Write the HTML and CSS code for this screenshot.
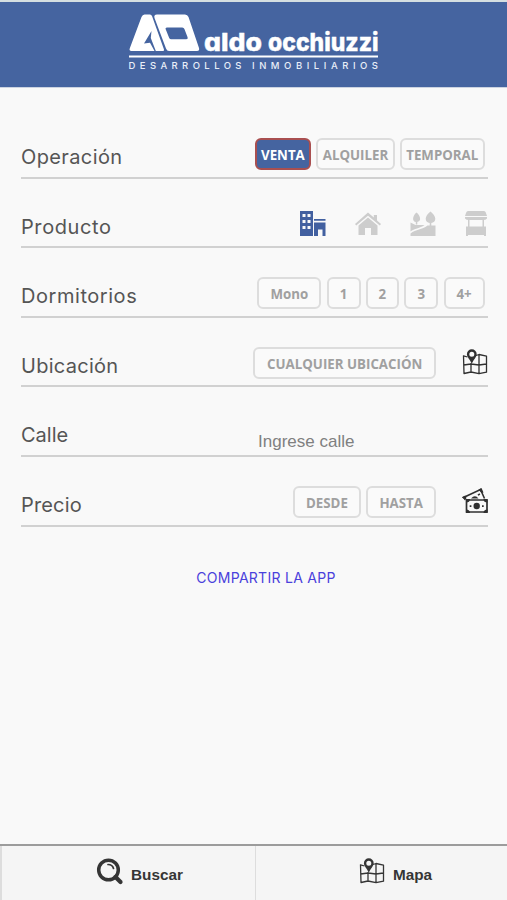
FILE: index.html
```html
<!DOCTYPE html>
<html lang="es">
<head>
<meta charset="utf-8">
<meta name="viewport" content="width=device-width, initial-scale=1">
<title>Aldo Occhiuzzi</title>
<link rel="stylesheet" href="styles.css">
</head>
<body>
<svg width="0" height="0" class="defs" aria-hidden="true">
  <symbol id="map" viewBox="0 0 26 26">
    <path d="M5.500 8 1.500 6.800 2 24.500l7-1.500 8 1.700 7.500-1.500V7.200L17 5.500l-3 1M1.700 16l7.300-1 8 1 7.500-1M9 14v9M17 5.500v19" fill="none" stroke="currentColor" stroke-width="1.300" stroke-linejoin="round"/>
    <path fill="currentColor" fill-rule="evenodd" d="M9.800.3A4.900 4.900 0 0 0 4.900 5.200c0 3 3 4.800 4.900 9.600 1.900-4.800 4.900-6.600 4.900-9.600A4.900 4.900 0 0 0 9.800.3zm0 2.400a2.500 2.500 0 1 1 0 5 2.500 2.500 0 0 1 0-5z"/>
  </symbol>
</svg>
<header class="header">
  <svg class="logo" width="262" height="64" viewBox="-2 0 262 64" fill="#fff">
    <path fill-rule="evenodd" d="M19.500 2.500h5.500q1.300 0 2 1.500L39 37.500Q39.300 39 38 39H6.500Q3.800 39 4.800 36.300L16.500 5Q17.500 2.500 19.500 2.500zM26.500 19 19 31.500l6-.8 4.500 8.300h1.300L25.800 26z"/>
    <path fill-rule="evenodd" d="M32 2.500h28q2.500 0 3.500 2.500L74 36q.8 3-2 3H44q-2 0-3-2.500L29.500 6Q28.500 2.500 32 2.500zM42 15.500q-2 0-1.200 2l3.300 8.200q.6 1.500 2.200 1.500h15q2 0 1.300-2l-3.200-8.200q-.5-1.500-2.100-1.500z"/>
    <text class="wordmark" x="79" y="38.500" textLength="58" lengthAdjust="spacingAndGlyphs">aldo</text>
    <text class="wordmark" x="143" y="38.500" textLength="110.500" lengthAdjust="spacingAndGlyphs">occhiuzzi</text>
    <path d="M4 43.500h249v2H4z"/>
    <text class="tagline" x="3.500" y="57" textLength="113">DESARROLLOS</text>
    <text class="tagline" x="127" y="57" textLength="126">INMOBILIARIOS</text>
  </svg>
</header>
<main class="form">
  <section class="row">
    <h2 class="label operacion">Operación</h2>
    <div class="options">
      <button class="btn active w56">VENTA</button><button class="btn w79">ALQUILER</button><button class="btn w85">TEMPORAL</button>
    </div>
  </section>
  <section class="row">
    <h2 class="label producto">Producto</h2>
    <div class="products">
      <svg class="chosen" width="26" height="26" viewBox="0 0 26 26"><path fill="currentColor" fill-rule="evenodd" d="M0 0h13v25H0zM2.500 3v3h3V3zm5 0v3h3V3zm-5 6v3h3V9zm5 0v3h3V9zm-5 6v3h3v-3zm5 0v3h3v-3zM14 8h11.500v1.700H14zM14 11.500h11.500V25h-3v-6.500h-4.500V25h-4z"/></svg>
      <svg width="26" height="26" viewBox="0 0 26 26"><path fill="currentColor" d="M13 1.500l5.800 5V4H22v5.400l4 3.600-1.200 1.500L13 4.800 1.200 14.500 0 13zM13 6.500l9.500 8V24H16v-7h-6v7H3.500v-9.500z"/></svg>
      <svg width="26" height="26" viewBox="0 0 26 26"><path fill="currentColor" d="M6.500 1.500C8.500 3 10.300 6 10.100 8c0 1.500-1.200 2.600-2.800 3v2.500H5.800V11c-1.600-.3-2.700-1.400-2.700-3 0-2 1.300-5 3.400-6.500zM20.500.500c2.700 2 4.800 5 4.800 7.300 0 2.500-1.700 4-4 4.300v3h-1.600v-3c-2.300-.3-4-1.800-4-4.300 0-2.300 2-5.300 4.800-7.300zM.5 11.500l5 2.500h9C10 17.500 4 17.500.5 20.500zM.5 22.500C6 18 12 19 17.500 14.500H25.500V25H.5z"/></svg>
      <svg width="22" height="26" viewBox="0 0 22 26"><path fill="currentColor" d="M3 0h16q1.300 0 1.800 1.500L22 5H0l1.200-3.500Q1.700 0 3 0zM0 6h22v1.500Q20.500 9 18.500 9H3.500Q1.500 9 0 7.500zM3 9h1.500v6.500H3zm14.500 0H19v6.500h-1.500zM1 15.500h20V25h-2v-1H3v1H1z"/></svg>
    </div>
  </section>
  <section class="row">
    <h2 class="label dormitorios">Dormitorios</h2>
    <div class="options">
      <button class="btn w64">Mono</button><button class="btn w34">1</button><button class="btn w33">2</button><button class="btn w34">3</button><button class="btn w41">4+</button>
    </div>
  </section>
  <section class="row">
    <h2 class="label ubicacion">Ubicación</h2>
    <div class="options with-icon">
      <button class="btn w183">CUALQUIER UBICACIÓN</button>
      <svg class="side-icon" width="26" height="26"><use href="#map"/></svg>
    </div>
  </section>
  <section class="row">
    <h2 class="label calle">Calle</h2>
    <input class="street" type="text" placeholder="Ingrese calle">
  </section>
  <section class="row">
    <h2 class="label precio">Precio</h2>
    <div class="options with-icon">
      <button class="btn w68">DESDE</button><button class="btn w70">HASTA</button>
      <svg class="side-icon" width="26" height="26" viewBox="0 0 26 26"><path d="M3.500 11 1.500 9.500 18.500 1.500l4 9" fill="none" stroke="currentColor" stroke-width="1.600"/><path fill="currentColor" d="M.3 9l3-1.500 1.200 2.500L3 12.500zM16.500 1.500l3-1.500L21.500 4.500l-2 .5zM9 10.500q4-4.500 7.500 0zM15.500 6.500l2-1.300.8 1.500-2 1z"/><path d="M4.500 12h20.500v12h-20.500z" fill="#f9f9f9" stroke="currentColor" stroke-width="1.700"/><circle cx="14.700" cy="18" r="3.200" fill="currentColor"/><path fill="currentColor" d="M4 11h4q0 3.500-4 3.500zM25.500 11h-4q0 3.500 4 3.500zM4 25h4q0-3.500-4-3.500zM25.500 25h-4q0-3.500 4-3.500zM7.700 17.200h1.700v1.700H7.700zM20 17.200h1.700v1.700H20z"/></svg>
    </div>
  </section>
  <a class="share">COMPARTIR LA APP</a>
</main>
<nav class="tabs">
  <a class="tab search"><svg width="28" height="28" viewBox="0 0 28 28" fill="none" stroke="currentColor"><circle cx="12.500" cy="12" r="9.800" stroke-width="3.500"/><path d="M12 6.500q4.500 0 5.500 4" stroke-width="1.700" stroke-linecap="round"/><path d="M19.500 19l5 5" stroke-width="4.200" stroke-linecap="round"/></svg><span>Buscar</span></a>
  <a class="tab map"><svg width="26" height="26"><use href="#map"/></svg><span>Mapa</span></a>
</nav>
</body>
</html>
```
FILE: styles.css
```css
* { box-sizing: border-box; }
body {
  margin: 0;
  height: 900px;
  display: flex;
  flex-direction: column;
  overflow: hidden;
  background: #f9f9f9;
  color: #4a4a4a;
  font-family: "Open Sans", sans-serif;
}
.defs { display: none; }
.header {
  height: 88px;
  flex: none;
  display: flex;
  justify-content: center;
  border-top: 2px solid #d5dfe1;
  border-bottom: 1px solid #cbd3e1;
  background: #4564a0;
}
.logo { display: block; margin: 10px 0 0 1px; overflow: visible; }
.wordmark {
  font: 800 25px Inter, sans-serif;
  font-feature-settings: "cv11" 1;
  stroke: #fff;
  stroke-width: .4px;
}
.tagline { font: 500 9.500px Inter, sans-serif; fill: #e8eef8; }
.form {
  flex: 1;
  display: flex;
  flex-direction: column;
  padding: 21px 19px 0 21px;
}
.row {
  height: 69.600px;
  flex: none;
  display: flex;
  justify-content: space-between;
  align-items: flex-end;
  border-bottom: 2px solid #d1d1d1;
}
.label {
  margin: 0 0 4.500px;
  font: 400 20px/30px Inter, sans-serif;
  color: #555;
}
.operacion { letter-spacing: .38px; }
.producto { letter-spacing: .6px; }
.dormitorios { letter-spacing: .55px; }
.ubicacion { letter-spacing: .28px; }
.precio { letter-spacing: .15px; }
.options {
  display: flex;
  gap: 5.300px;
  padding: 0 3.500px 6.600px 0;
}
.with-icon { padding-right: 0; }
.btn {
  height: 32px;
  padding: 2px 0 0;
  border: 2px solid #ddd;
  border-radius: 6px;
  background: #fafafa;
  color: #a0a0a0;
  font: 700 13.300px "Open Sans", sans-serif;
  white-space: nowrap;
}
.active { background: #4564a0; border-color: #a94f50; color: #fff; }
.w33 { width: 33px; }
.w34 { width: 34px; }
.w41 { width: 41px; }
.w56 { width: 56px; }
.w64 { width: 64px; }
.w68 { width: 68px; }
.w70 { width: 70px; }
.w79 { width: 78.500px; }
.w85 { width: 84.500px; }
.w183 { width: 183px; }
.side-icon { margin: 2.500px 0 0 20.500px; color: #303030; }
.products {
  display: flex;
  gap: 28.700px;
  padding: 0 1.500px 9px 0;
  color: #cdcdcd;
}
.chosen { color: #4260a0; }
.street {
  width: 230px;
  height: 25px;
  padding: 0;
  border: 0;
  background: transparent;
  font: 17px "Liberation Sans", sans-serif;
}
.street::placeholder { color: #808080; opacity: 1; }
.share {
  align-self: center;
  margin: 41px 0 0 23px;
  color: #4a41dc;
  font: 400 14px/20px Inter, sans-serif;
  letter-spacing: .28px;
}
.tabs {
  height: 56px;
  flex: none;
  display: grid;
  grid-template-columns: 256px 1fr;
  border-top: 2px solid #9c9c9c;
  background: #f5f5f5;
}
.tab {
  display: flex;
  align-items: flex-start;
  gap: 7px;
  padding-top: 12px;
  color: #353535;
  font: 700 15.300px/20px "Liberation Sans", sans-serif;
}
.tab span { margin-top: 7px; }
.search { padding-left: 94px; border-left: 2px solid #ddd; border-right: 1px solid #ddd; }
.map { padding-left: 103px; gap: 8px; }
```
